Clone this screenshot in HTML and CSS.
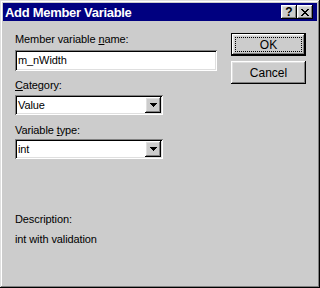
FILE: index.html
```html
<!DOCTYPE html>
<html lang="en">

<head>
    <meta charset="UTF-8">
    <title>Add Member Variable</title>
    <link rel="stylesheet" href="styles.css">
</head>

<body>
    <div class="window">
        <div class="titlebar">
            <span class="title">Add Member Variable</span>
            <div class="cap-btn help">?</div>
            <div class="cap-btn close">
                <svg width="8" height="7" viewBox="0 0 8 7" shape-rendering="crispEdges">
                    <path d="M0 0h2v1H0z M6 0h2v1H6z M1 1h2v1H1z M5 1h2v1H5z M2 2h4v1H2z M3 3h2v1H3z M2 4h4v1H2z M1 5h2v1H1z M5 5h2v1H5z M0 6h2v1H0z M6 6h2v1H6z" fill="#000"/>
                </svg>
            </div>
        </div>

        <div class="content">
            <div class="fields">
                <div class="label first">Member variable <u>n</u>ame:</div>
                <div class="edit">m_nWidth</div>

                <div class="label cat">
                    <u>C</u>ategory:
                </div>
                <div class="combo">
                    <span class="value">Value</span>
                    <span class="drop">
                        <svg width="7" height="4" viewBox="0 0 7 4" shape-rendering="crispEdges">
                            <path d="M0 0h7v1H0z M1 1h5v1H1z M2 2h3v1H2z M3 3h1v1H3z" fill="#000"/>
                        </svg>
                    </span>
                </div>

                <div class="label vtype">Variable <u>t</u>ype:</div>
                <div class="combo">
                    <span class="value">int</span>
                    <span class="drop">
                        <svg width="7" height="4" viewBox="0 0 7 4" shape-rendering="crispEdges">
                            <path d="M0 0h7v1H0z M1 1h5v1H1z M2 2h3v1H2z M3 3h1v1H3z" fill="#000"/>
                        </svg>
                    </span>
                </div>

                <div class="label desc">Description:</div>
                <div class="label desc-text">int with validation</div>
            </div>

            <div class="buttons">
                <div class="btn default"><span>OK</span></div>
                <div class="btn">Cancel</div>
            </div>
        </div>
    </div>
</body>

</html>
```

FILE: styles.css
```css
body {
    margin: 0;
    font-family: "Liberation Sans", Arial, sans-serif;
    font-size: 11px;
    letter-spacing: -0.1px;
    color: #000;
}

.window {
    width: 320px;
    height: 288px;
    box-sizing: border-box;
    padding: 3px;
    background: #cccccc;
    box-shadow: inset -1px -1px #000, inset 1px 1px #dfdfdf,
        inset -2px -2px #808080, inset 2px 2px #fff;
}

.titlebar {
    height: 18px;
    background: #000080;
    display: flex;
    align-items: center;
    padding: 0 4px 0 2px;
}

.title {
    flex: 1;
    color: #fff;
    font-weight: bold;
    font-size: 13px;
    letter-spacing: -0.3px;
}

.cap-btn {
    width: 16px;
    height: 14px;
    box-sizing: border-box;
    display: flex;
    align-items: center;
    justify-content: center;
    background: #cccccc;
    box-shadow: inset -1px -1px #000, inset 1px 1px #fff,
        inset -2px -2px #808080, inset 2px 2px #dfdfdf;
}

.help {
    font-weight: bold;
    font-size: 12px;
    letter-spacing: 0;
    line-height: 14px;
}

.content {
    display: flex;
    padding: 12px 0 0 12px;
}

.fields {
    width: 202px;
    display: flex;
    flex-direction: column;
}

.label {
    line-height: 13px;
    height: 13px;
}

.edit {
    height: 21px;
    margin-top: 4px;
    box-sizing: border-box;
    padding: 0 3px;
    line-height: 21px;
    background: #fff;
    box-shadow: inset 1px 1px #808080, inset -1px -1px #fff,
        inset 2px 2px #000, inset -2px -2px #dfdfdf;
}

.cat {
    margin-top: 8px;
}

.vtype {
    margin-top: 9px;
}

.combo {
    width: 148px;
    height: 20px;
    margin-top: 3px;
    box-sizing: border-box;
    padding: 2px;
    display: flex;
    align-items: center;
    background: #fff;
    box-shadow: inset 1px 1px #808080, inset -1px -1px #fff,
        inset 2px 2px #000, inset -2px -2px #dfdfdf;
}

.vtype + .combo {
    margin-top: 2px;
}

.value {
    flex: 1;
    padding-left: 1px;
}

.drop {
    width: 16px;
    height: 16px;
    display: flex;
    align-items: center;
    justify-content: center;
    background: #cccccc;
    box-shadow: inset -1px -1px #000, inset 1px 1px #fff,
        inset -2px -2px #808080, inset 2px 2px #dfdfdf;
}

.desc {
    margin-top: 54px;
}

.desc-text {
    margin-top: 7px;
}

.buttons {
    margin-left: 14px;
    display: flex;
    flex-direction: column;
    gap: 5px;
}

.btn {
    width: 75px;
    height: 23px;
    box-sizing: border-box;
    display: flex;
    align-items: center;
    justify-content: center;
    font-size: 12px;
    letter-spacing: 0;
    background: #cccccc;
    box-shadow: inset -1px -1px #000, inset 1px 1px #fff,
        inset -2px -2px #808080, inset 2px 2px #dfdfdf;
}

.btn.default {
    border: 1px solid #000;
    outline: 1px dotted #000;
    outline-offset: -5px;
}
```
